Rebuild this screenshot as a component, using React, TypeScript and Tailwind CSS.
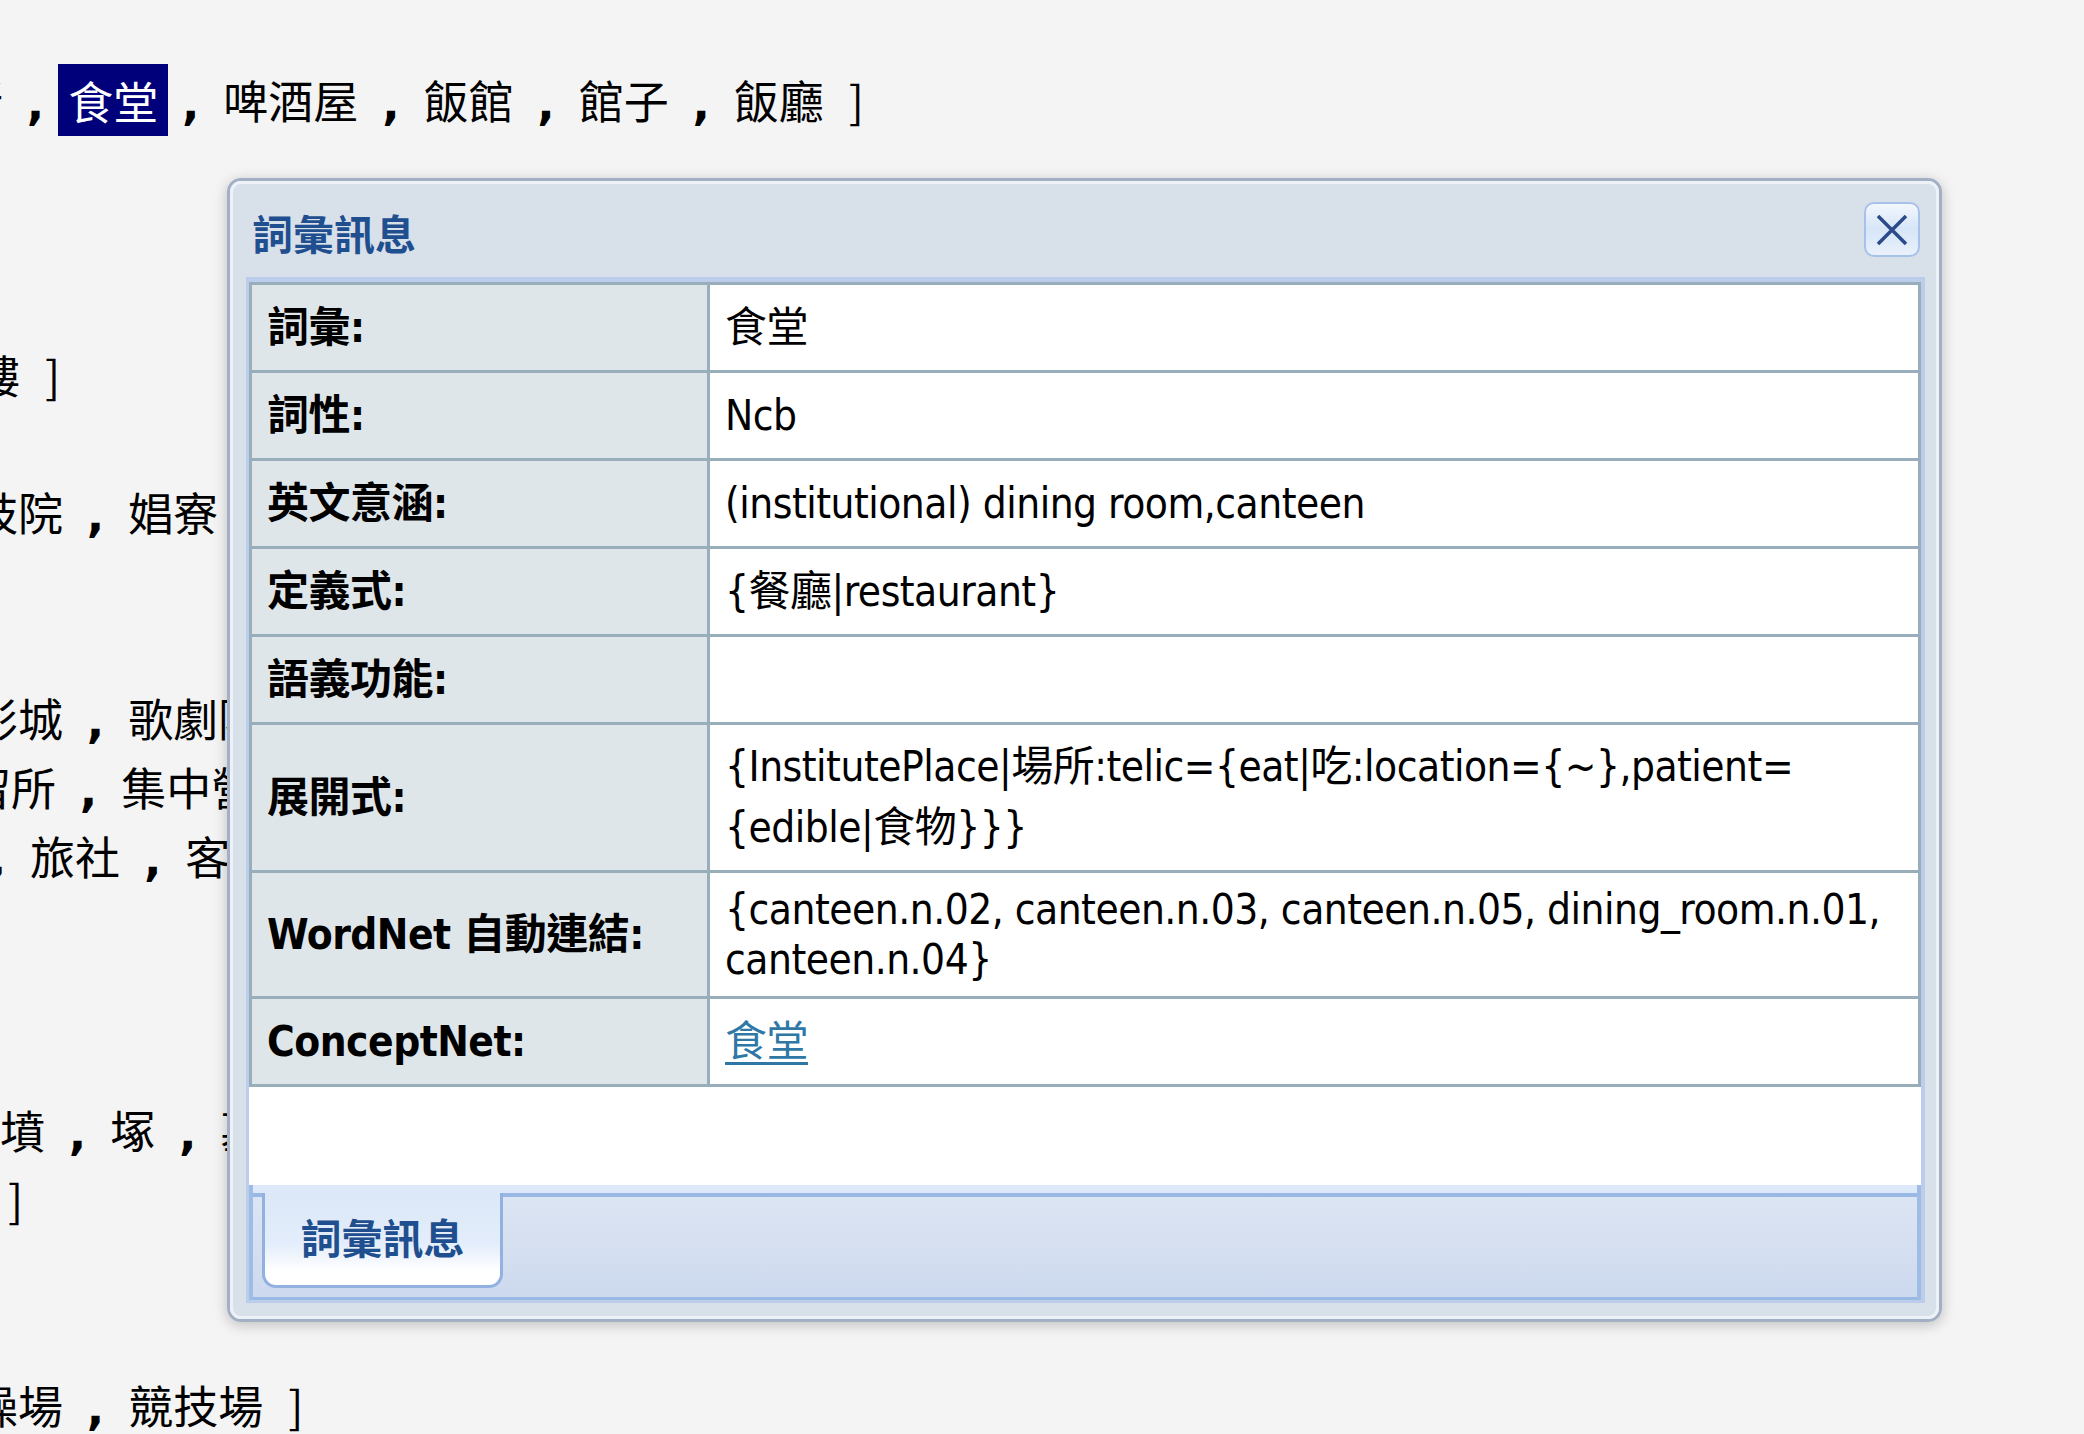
import React from "react";

const cell = "font-['DejaVu_Sans_Condensed','Liberation_Sans','Noto_Sans_CJK_TC',sans-serif]";

function Comma() {
  return (
    <span className="inline-block w-[45px] text-center font-['DejaVu_Sans',sans-serif] text-[46px] font-bold leading-[30px]">
      ,
    </span>
  );
}

function Bracket() {
  return <span className="inline-block w-[45px] text-center">]</span>;
}

// turns "飯館 ， 館子 ］" into text with drawn punctuation
function Phrase({ text }: { text: string }) {
  const out: React.ReactNode[] = [];
  let buf = "";
  text.split("").forEach((ch, i) => {
    if (ch === "，" || ch === "］") {
      if (buf) out.push(buf);
      buf = "";
      out.push(ch === "，" ? <Comma key={i} /> : <Bracket key={i} />);
    } else {
      buf += ch;
    }
  });
  if (buf) out.push(buf);
  return <>{out}</>;
}

type BgLine = { ml: string; body?: React.ReactNode };

const bgLines: BgLine[] = [
  {
    ml: "-ml-[42px]",
    body: (
      <>
        <Phrase text="所 ，" />
        <span className="bg-[#00007b] py-[3.5px] text-white"> 食堂 </span>
        <Phrase text="， 啤酒屋 ， 飯館 ， 館子 ， 飯廳 ］" />
      </>
    ),
  },
  { ml: "ml-0" },
  { ml: "ml-0" },
  { ml: "ml-0" },
  { ml: "-ml-[25px]", body: <Phrase text="樓 ］" /> },
  { ml: "ml-0" },
  { ml: "-ml-[27px]", body: <Phrase text="妓院 ， 娼寮 ， 青樓 ］" /> },
  { ml: "ml-0" },
  { ml: "ml-0" },
  { ml: "-ml-[27px]", body: <Phrase text="影城 ， 歌劇院 ， 劇場 ］" /> },
  { ml: "-ml-[34px]", body: <Phrase text="留所 ， 集中營 ］" /> },
  { ml: "-ml-[25px]", body: <Phrase text="， 旅社 ， 客棧 ］" /> },
  { ml: "ml-0" },
  { ml: "ml-0" },
  { ml: "ml-0" },
  { ml: "ml-0", body: <Phrase text="墳 ， 塚 ， 墓 ］" /> },
  { ml: "-ml-[62px]", body: <Phrase text="陵 ］" /> },
  { ml: "ml-0" },
  { ml: "ml-0" },
  { ml: "-ml-[27px]", body: <Phrase text="操場 ， 競技場 ］" /> },
];

type Row = { label: string; value?: React.ReactNode; lh?: string };

const rows: Row[] = [
  { label: "詞彙:", value: "食堂" },
  { label: "詞性:", value: "Ncb" },
  { label: "英文意涵:", value: "(institutional) dining room,canteen" },
  { label: "定義式:", value: "{餐廳|restaurant}" },
  { label: "語義功能:" },
  {
    label: "展開式:",
    lh: "leading-[60.5px]",
    value: (
      <>
        {"{InstitutePlace|場所:telic={eat|吃:location={~},patient="}
        <br />
        {"{edible|食物}}}"}
      </>
    ),
  },
  {
    label: "WordNet 自動連結:",
    lh: "leading-[49.5px]",
    value: (
      <>
        {"{canteen.n.02, canteen.n.03, canteen.n.05, dining_room.n.01,"}
        <br />
        {"canteen.n.04}"}
      </>
    ),
  },
  {
    label: "ConceptNet:",
    value: (
      <a href="#" className="text-[#2f78a6] underline decoration-[3px] underline-offset-[6px]">
        食堂
      </a>
    ),
  },
];

function CloseButton() {
  return (
    <button className="mr-[5px] mt-[18px] flex h-[55px] w-[56px] items-center justify-center rounded-[10px] border-2 border-[#a6c2ea] bg-linear-to-b from-[#f3f7fd] via-[#d6e5f8] to-[#eaf1fb]">
      <svg width="34" height="32" viewBox="0 0 34 32">
        <path d="M3 2 L31 30 M31 2 L3 30" stroke="#2c4a88" strokeWidth="3.5" fill="none" />
      </svg>
    </button>
  );
}

export default function App() {
  return (
    <div className="relative h-[1434px] w-[2084px] overflow-hidden bg-[#f4f4f4]">
      {/* page text behind the dialog */}
      <div className="pt-[66px] font-['Noto_Sans_CJK_TC',sans-serif] text-[45px] leading-[68.7px] text-black">
        {bgLines.map((l, i) => (
          <div key={i} className={`h-[68.7px] whitespace-pre ${l.ml}`}>
            {l.body ?? "\u00a0"}
          </div>
        ))}
      </div>

      {/* dialog */}
      <div className="absolute left-[227px] top-[178px] w-[1715px] rounded-[14px] border-[3px] border-[#a2afc4] shadow-[0_3px_14px_rgba(0,0,0,0.22)]">
        <div className="rounded-[11px] border-[3px] border-[#edf2f9] bg-[#d8e0ea] pb-[13px] pl-[13px] pr-[11px]">
          <div className="flex h-[93px] items-start justify-between">
            <h1 className="ml-[6px] mt-[28px] font-['Noto_Sans_CJK_TC',sans-serif] text-[41px] font-bold leading-[41px] text-[#1f4f8e]">
              詞彙訊息
            </h1>
            <CloseButton />
          </div>

          <div className="border-b-[3px] border-l-[3px] border-r-[4px] border-t-[5px] border-[#bccdeb] bg-white">
            <div className={`border-x-[3px] border-t-[3px] border-[#98afbb] text-[42px] tracking-[-0.5px] text-black ${cell}`}>
              {rows.map((r) => (
                <div key={r.label} className="flex border-b-[3px] border-[#98afbb]">
                  <div className="flex w-[455px] shrink-0 items-center bg-[#dfe6ea] py-[12px] pl-[15px] font-bold leading-[61px]">
                    {r.label}
                  </div>
                  <div
                    className={`flex min-h-[85px] flex-1 items-center border-l-[3px] border-[#98afbb] bg-white py-[12px] pl-[15px] ${r.lh ?? "leading-[61px]"}`}
                  >
                    <div>{r.value}</div>
                  </div>
                </div>
              ))}
            </div>

            <div className="h-[98px]" />

            <div className="border-x-[4px] border-[#9fbce6]">
              <div className="h-[8px] bg-[#dde8f8]" />
              <div className="flex h-[107px] items-start border-b-[3px] border-t-[4px] border-[#9ab8e4] bg-linear-to-b from-[#dce5f3] to-[#cdd9ee]">
                <div className="-mt-[4px] ml-[9px] flex h-[95px] w-[241px] items-center justify-center rounded-b-[14px] border-x-[3px] border-b-[3px] border-[#92b1e0] bg-linear-to-b from-[#dce8f8] from-0% via-[#e3edfb] via-55% to-white to-85% pb-[5px]">
                  <span className="font-['Noto_Sans_CJK_TC',sans-serif] text-[41px] font-bold leading-[41px] text-[#1f4f8e]">
                    詞彙訊息
                  </span>
                </div>
              </div>
            </div>
          </div>
        </div>
      </div>
    </div>
  );
}
